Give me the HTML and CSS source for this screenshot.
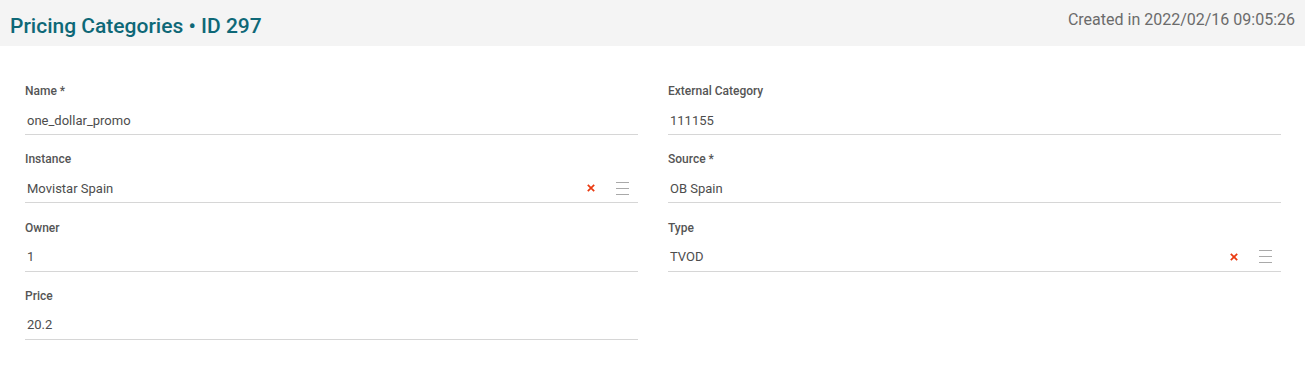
FILE: index.html
```html
<!DOCTYPE html>
<html lang="en">
<head>
    <meta charset="utf-8">
    <title>Pricing Categories</title>
    <link rel="stylesheet" href="styles.css">
</head>
<body>
    <!-- Cabecera -->
    <div class="page-header">
        <h1 class="page-title">Pricing Categories &bull; ID 297</h1>
        <span class="page-meta">Created in 2022/02/16 09:05:26</span>
    </div>

    <!-- Formulario -->
    <form class="record-form">
        <div class="form-column">
            <div class="field">
                <label class="field-label">Name *</label>
                <div class="field-value"><span class="value-text">one_dollar_promo</span></div>
            </div>
            <div class="field">
                <label class="field-label">Instance</label>
                <div class="field-value">
                    <span class="value-text">Movistar Spain</span>
                    <span class="field-actions">
                        <svg class="icon-clear" width="8" height="8" viewBox="0 0 8 8"><path d="M0.8 0.8L7.2 7.2M7.2 0.8L0.8 7.2" stroke="#ea3a10" stroke-width="1.7"/></svg>
                        <svg class="icon-list" width="13" height="13" viewBox="0 0 13 13"><path d="M0 0.5H13M0 6.5H13M0 12.5H13" stroke="#a9a9a9" stroke-width="1"/></svg>
                    </span>
                </div>
            </div>
            <div class="field">
                <label class="field-label">Owner</label>
                <div class="field-value"><span class="value-text">1</span></div>
            </div>
            <div class="field">
                <label class="field-label">Price</label>
                <div class="field-value"><span class="value-text">20.2</span></div>
            </div>
        </div>

        <div class="form-column">
            <div class="field">
                <label class="field-label">External Category</label>
                <div class="field-value"><span class="value-text">111155</span></div>
            </div>
            <div class="field">
                <label class="field-label">Source *</label>
                <div class="field-value"><span class="value-text">OB Spain</span></div>
            </div>
            <div class="field">
                <label class="field-label">Type</label>
                <div class="field-value">
                    <span class="value-text">TVOD</span>
                    <span class="field-actions">
                        <svg class="icon-clear" width="8" height="8" viewBox="0 0 8 8"><path d="M0.8 0.8L7.2 7.2M7.2 0.8L0.8 7.2" stroke="#ea3a10" stroke-width="1.7"/></svg>
                        <svg class="icon-list" width="13" height="13" viewBox="0 0 13 13"><path d="M0 0.5H13M0 6.5H13M0 12.5H13" stroke="#a9a9a9" stroke-width="1"/></svg>
                    </span>
                </div>
            </div>
        </div>
    </form>
</body>
</html>
```

FILE: styles.css
```css
/* Estilos generales */
body {
    margin: 0;
    font-family: Roboto, "Liberation Sans", sans-serif;
    background-color: #fff;
    color: #555;
}

/* Cabecera */
.page-header {
    display: flex;
    justify-content: space-between;
    align-items: flex-start;
    height: 46px;
    padding: 0 10px;
    background-color: #f4f4f4;
}

.page-title {
    margin: 13px 0 0;
    font-size: 21px;
    font-weight: 500;
    line-height: 26px;
    color: #0e6877;
}

.page-meta {
    margin-top: 10px;
    font-size: 16px;
    line-height: 20px;
    color: #6b6b6b;
}

/* Formulario */
.record-form {
    display: grid;
    grid-template-columns: 1fr 1fr;
    column-gap: 30px;
    padding: 37px 24px 0 25px;
}

.field {
    display: flex;
    flex-direction: column;
    margin-bottom: 16.33px;
}

.field-label {
    font-size: 12px;
    font-weight: 500;
    line-height: 16px;
    color: #555;
    margin-bottom: 7px;
}

.field-value {
    display: flex;
    align-items: center;
    justify-content: space-between;
    height: 28px;
    padding-left: 2px;
    border-bottom: 1px solid #d6d6d6;
    font-size: 13px;
    color: #4d4d4d;
}

.field-actions {
    display: flex;
    align-items: center;
    gap: 21px;
    padding-right: 9px;
}
```
